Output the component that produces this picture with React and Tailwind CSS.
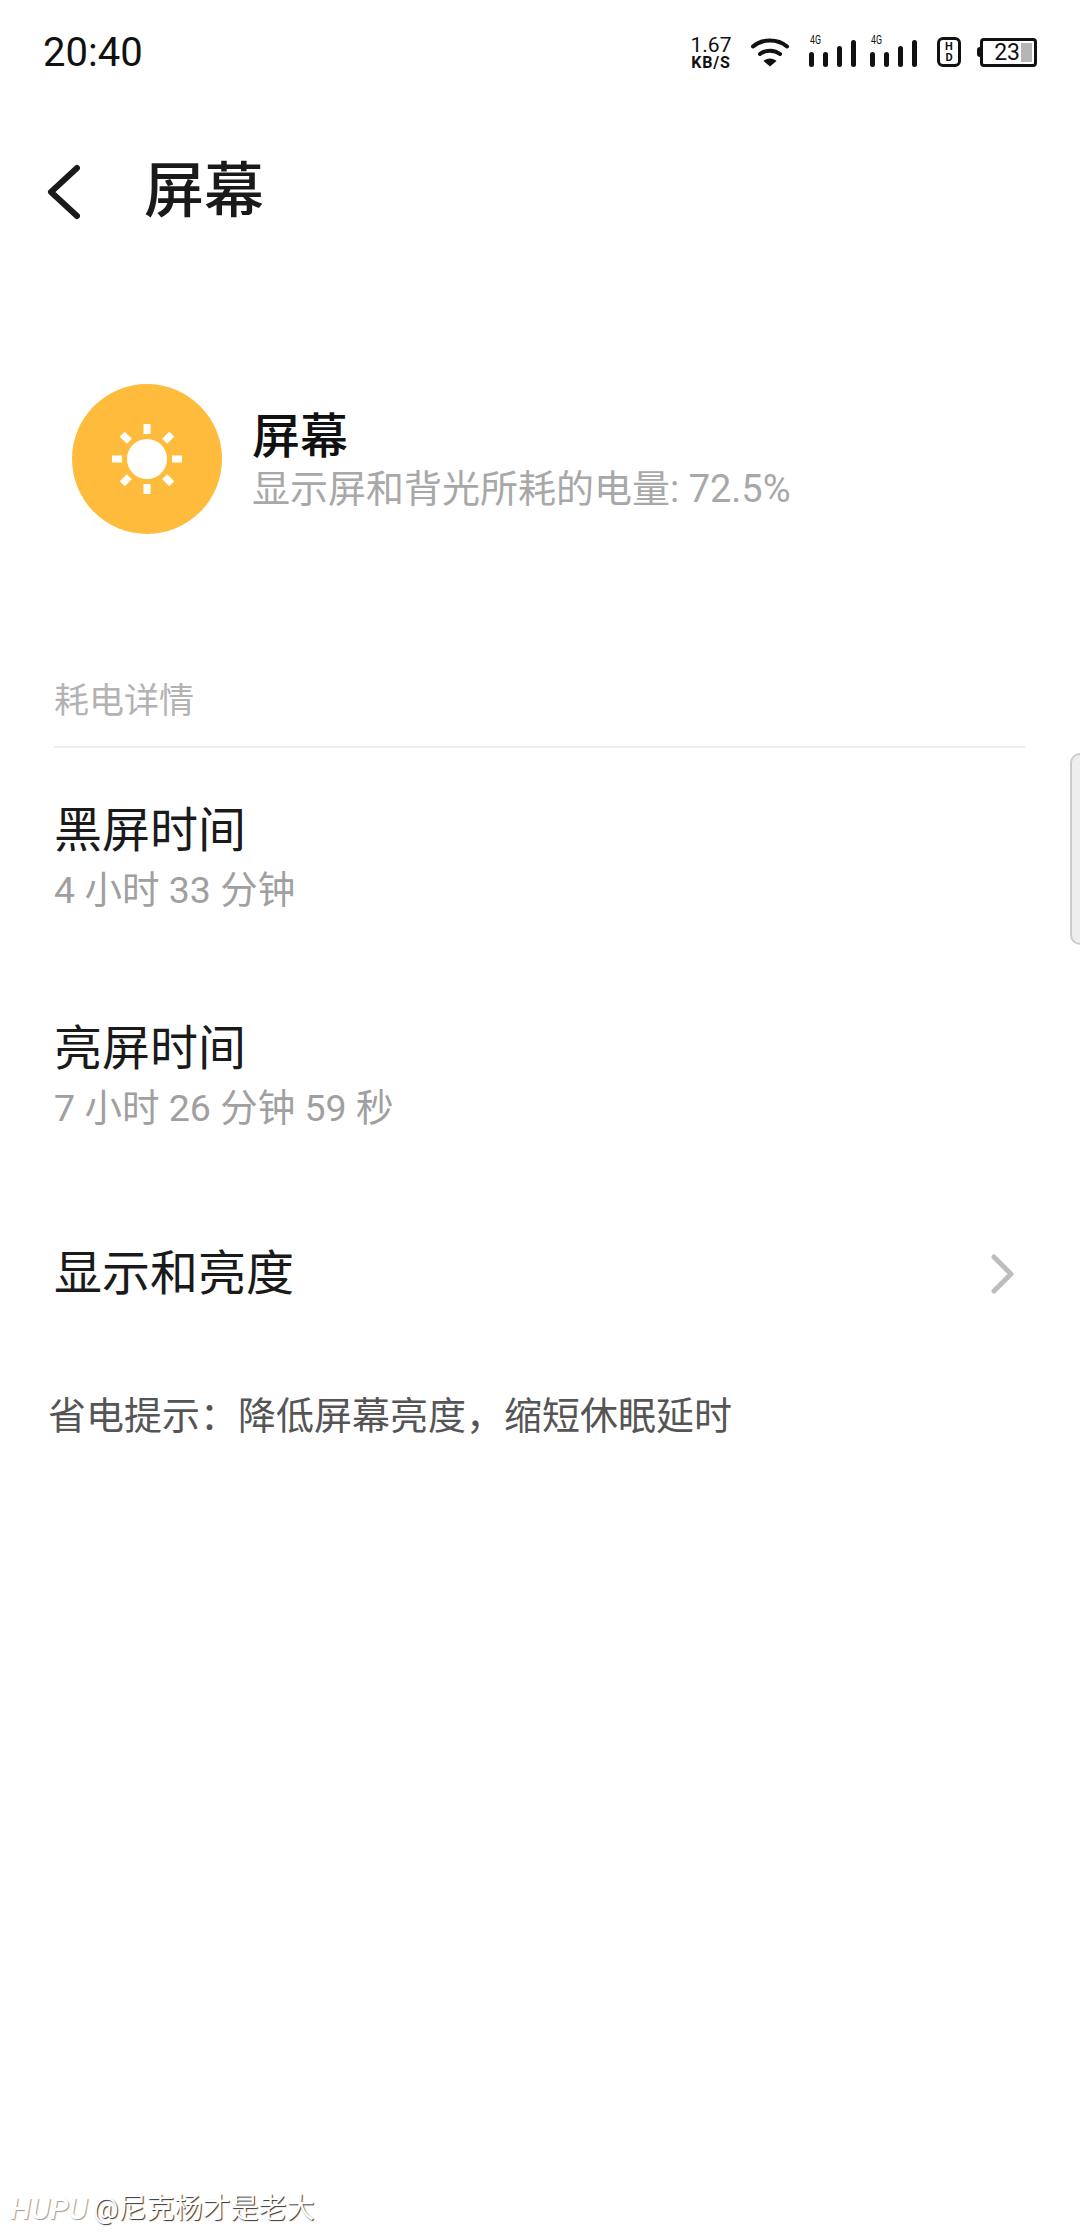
import React from 'react'

const font = { fontFamily: 'Roboto, "Noto Sans CJK SC", sans-serif' }

function Wifi() {
  return (
    <svg width="38" height="30" viewBox="0 0 38 30" fill="none">
      <path d="M2 9.5C11.5 1.5 26.5 1.5 36 9.5" stroke="#111" strokeWidth="4" strokeLinecap="round" />
      <path d="M9 17C14.5 12.5 23.5 12.5 29 17" stroke="#111" strokeWidth="4" strokeLinecap="round" />
      <path d="M12.5 24C15.5 20.5 22.5 20.5 25.5 24L19 29.5Z" fill="#111" />
    </svg>
  )
}

function Signal() {
  return (
    <svg className="-mt-[6px]" width="48" height="40" viewBox="0 -6 48 40" fill="#111">
      <text x="2" y="9" fontSize="12" fontFamily="Roboto" textLength="11" lengthAdjust="spacingAndGlyphs">4G</text>
      <rect x="1" y="17" width="5" height="15" rx="2.5" />
      <rect x="15" y="17" width="5" height="15" rx="2.5" />
      <rect x="29" y="11" width="5" height="21" rx="2.5" />
      <rect x="43" y="5" width="5" height="27" rx="2.5" />
    </svg>
  )
}

function Hd() {
  return (
    <div className="w-[24px] h-[30px] rounded-[6px] border-[3px] border-[#111] flex flex-col items-center justify-center text-[11px] leading-[11px] font-bold text-[#111]">
      <span>H</span>
      <span>D</span>
    </div>
  )
}

function Battery() {
  return (
    <div className="flex items-center">
      <div className="w-[3px] h-[10px] bg-[#111] rounded-l-sm"></div>
      <div className="w-[57px] h-[29px] rounded-[4px] border-[3px] border-[#111] flex items-center justify-end pr-[2px] gap-[1px]">
        <span className="text-[23px] leading-none text-[#111]">23</span>
        <div className="w-[11px] h-[19px] bg-[#b5b5b5]"></div>
      </div>
    </div>
  )
}

function Sun() {
  return (
    <svg width="70" height="70" viewBox="0 0 70 70" fill="#fff">
      <circle cx="35" cy="35" r="20" />
      <rect x="31.5" y="0" width="7" height="10" />
      <rect x="31.5" y="60" width="7" height="10" />
      <rect x="0" y="31.5" width="10" height="7" />
      <rect x="60" y="31.5" width="10" height="7" />
      <rect x="31.5" y="0" width="7" height="10" transform="rotate(45 35 35)" />
      <rect x="31.5" y="0" width="7" height="10" transform="rotate(135 35 35)" />
      <rect x="31.5" y="0" width="7" height="10" transform="rotate(225 35 35)" />
      <rect x="31.5" y="0" width="7" height="10" transform="rotate(315 35 35)" />
    </svg>
  )
}

function Row({ title, sub }) {
  return (
    <div className="h-[218px] pt-[50px] pl-[54px]">
      <div className="text-[48px] leading-[66px] text-[#1a1a1a]">{title}</div>
      <div className="text-[37.5px] leading-[50px] mt-[1px] text-[#a0a0a0]">{sub}</div>
    </div>
  )
}

export default function App() {
  return (
    <div className="relative w-[1080px] h-[2232px] bg-white overflow-hidden" style={font}>
      {/* status bar */}
      <div className="h-[104px] flex items-center justify-between pl-[43px] pr-[43px]">
        <span className="text-[40px] text-[#111] pt-[2px]">20:40</span>
        <div className="flex items-center">
          <div className="flex flex-col items-center text-[#111] w-[44px] pt-[1px]">
            <span className="text-[21px] leading-[20px]">1.67</span>
            <span className="text-[16px] leading-[15px] font-bold tracking-[0.8px]">KB/S</span>
          </div>
          <div className="ml-[18px]"><Wifi /></div>
          <div className="ml-[19px]"><Signal /></div>
          <div className="ml-[13px]"><Signal /></div>
          <div className="ml-[20px]"><Hd /></div>
          <div className="ml-[16px]"><Battery /></div>
        </div>
      </div>

      {/* title */}
      <div className="h-[172px] flex items-center pt-[4px]">
        <svg className="ml-[46px]" width="36" height="56" viewBox="0 0 36 56" fill="none">
          <path d="M31 4L5 28L31 52" stroke="#1a1a1a" strokeWidth="6" strokeLinecap="round" strokeLinejoin="round" />
        </svg>
        <span className="ml-[62px] text-[60px] font-medium text-[#1a1a1a]">屏幕</span>
      </div>

      {/* summary */}
      <div className="mt-[108px] flex items-center pl-[72px]">
        <div className="w-[150px] h-[150px] rounded-full bg-[#ffbc3c] flex items-center justify-center">
          <Sun />
        </div>
        <div className="ml-[30px] pt-[1px]">
          <div className="text-[48px] leading-[58px] font-medium text-[#111]">屏幕</div>
          <div className="text-[38px] leading-[46px] text-[#a8a8a8]">显示屏和背光所耗的电量: 72.5%</div>
        </div>
      </div>

      {/* details */}
      <div className="mt-[138px] ml-[54px] w-[971px] h-[76px] border-b-2 border-[#eeeeee] text-[35px] leading-[60px] text-[#b3b3b3]">耗电详情</div>
      <Row title="黑屏时间" sub="4 小时 33 分钟" />
      <Row title="亮屏时间" sub="7 小时 26 分钟 59 秒" />
      <div className="h-[90px] mt-[45px] flex items-center justify-between pl-[54px] pr-[66px]">
        <span className="text-[48px] text-[#1a1a1a]">显示和亮度</span>
        <svg width="24" height="42" viewBox="0 0 24 42" fill="none">
          <path d="M4 4L21 21L4 38" stroke="#bdbdbd" strokeWidth="5" strokeLinecap="round" strokeLinejoin="round" />
        </svg>
      </div>
      <div className="mt-[72px] pl-[48px] text-[38px] leading-[50px] text-[#555555]">{'省电提示\uFF1A降低屏幕亮度\uFF0C缩短休眠延时'}</div>

      {/* side handle */}
      <div className="absolute right-0 top-[753px] w-[10px] h-[192px] rounded-l-[10px] border-2 border-r-0 border-[#cccccc] bg-[#eeeeee]"></div>

      {/* watermark */}
      <div className="absolute left-[10px] top-[2191px] flex items-center text-[28px] leading-[36px] text-white [text-shadow:1px_1px_1px_#333]">
        <span className="italic text-[30px] font-medium [text-shadow:1px_1px_1px_#999]">HUPU</span>
        <span className="ml-[6px]">@尼克杨才是老大</span>
      </div>
    </div>
  )
}
